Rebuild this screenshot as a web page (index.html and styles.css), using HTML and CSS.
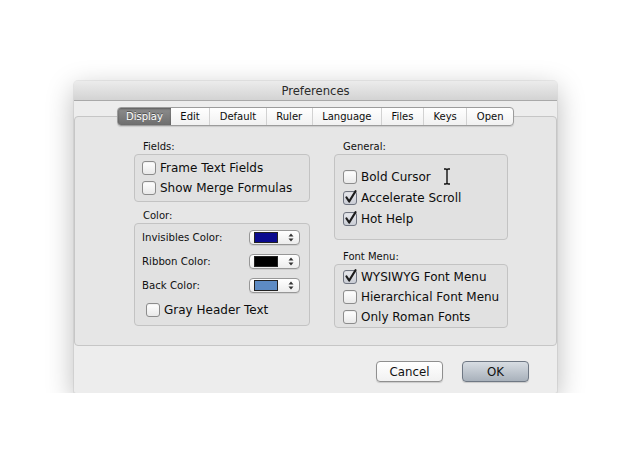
FILE: index.html
```html
<!DOCTYPE html>
<html>
<head>
<meta charset="utf-8">
<link rel="stylesheet" href="styles.css">
</head>
<body>
<div class="page">
  <div class="window">
    <div class="titlebar">Preferences</div>
    <div class="body">
      <div class="tabs">
        <div class="tab selected">Display</div>
        <div class="tab after-sel">Edit</div>
        <div class="tab">Default</div>
        <div class="tab">Ruler</div>
        <div class="tab">Language</div>
        <div class="tab">Files</div>
        <div class="tab">Keys</div>
        <div class="tab">Open</div>
      </div>
      <div class="panel">
        <div class="col col-left">
          <div class="group-label">Fields:</div>
          <div class="group fields">
            <label class="row"><span class="cb"></span>Frame Text Fields</label>
            <label class="row"><span class="cb"></span>Show Merge Formulas</label>
          </div>
          <div class="group-label spaced">Color:</div>
          <div class="group colors">
            <div class="color-row">
              <span class="clabel">Invisibles Color:</span>
              <span class="popup"><span class="swatch navy"></span><span class="arrows"><svg width="6" height="9" viewBox="0 0 6 9"><path d="M3 0.5 L5.5 3.5 H0.5 Z M3 8.5 L5.5 5.5 H0.5 Z" fill="#333"/></svg></span></span>
            </div>
            <div class="color-row">
              <span class="clabel">Ribbon Color:</span>
              <span class="popup"><span class="swatch black"></span><span class="arrows"><svg width="6" height="9" viewBox="0 0 6 9"><path d="M3 0.5 L5.5 3.5 H0.5 Z M3 8.5 L5.5 5.5 H0.5 Z" fill="#333"/></svg></span></span>
            </div>
            <div class="color-row">
              <span class="clabel">Back Color:</span>
              <span class="popup"><span class="swatch blue"></span><span class="arrows"><svg width="6" height="9" viewBox="0 0 6 9"><path d="M3 0.5 L5.5 3.5 H0.5 Z M3 8.5 L5.5 5.5 H0.5 Z" fill="#333"/></svg></span></span>
            </div>
            <label class="row gray-header"><span class="cb"></span>Gray Header Text</label>
          </div>
        </div>
        <div class="col col-right">
          <div class="group-label">General:</div>
          <div class="group general">
            <label class="row r21"><span class="cb"></span>Bold Cursor</label>
            <label class="row r21"><span class="cb checked"><svg class="tick" width="13" height="14" viewBox="0 0 13 14"><path d="M2.5 7.5 L5.2 11.5 L11.5 1.2" fill="none" stroke="#1c1c1c" stroke-width="2.2" stroke-linecap="round" stroke-linejoin="round"/></svg></span>Accelerate Scroll</label>
            <label class="row r21"><span class="cb checked"><svg class="tick" width="13" height="14" viewBox="0 0 13 14"><path d="M2.5 7.5 L5.2 11.5 L11.5 1.2" fill="none" stroke="#1c1c1c" stroke-width="2.2" stroke-linecap="round" stroke-linejoin="round"/></svg></span>Hot Help</label>
            <svg class="ibeam" width="8" height="17" viewBox="0 0 8 17"><path d="M1 1 H3 L4 2 L5 1 H7 M4 2 V15 M1 16 H3 L4 15 L5 16 H7" fill="none" stroke="#111" stroke-width="1.4"/></svg>
          </div>
          <div class="group-label spaced2">Font Menu:</div>
          <div class="group fontmenu">
            <label class="row"><span class="cb checked"><svg class="tick" width="13" height="14" viewBox="0 0 13 14"><path d="M2.5 7.5 L5.2 11.5 L11.5 1.2" fill="none" stroke="#1c1c1c" stroke-width="2.2" stroke-linecap="round" stroke-linejoin="round"/></svg></span>WYSIWYG Font Menu</label>
            <label class="row"><span class="cb"></span>Hierarchical Font Menu</label>
            <label class="row"><span class="cb"></span>Only Roman Fonts</label>
          </div>
        </div>
      </div>
      <div class="footer">
        <button class="btn">Cancel</button>
        <button class="btn default">OK</button>
      </div>
    </div>
  </div>
</div>
</body>
</html>
```
FILE: styles.css
```css
html, body {
  margin: 0;
  padding: 0;
  background: #ffffff;
}
body {
  font-family: "DejaVu Sans", "Liberation Sans", sans-serif;
  color: #111;
}
.page {
  padding: 81px 0 0 74px;
}
.window {
  width: 483px;
  height: 312px;
  background: #ededed;
  border-radius: 4px 4px 2px 2px;
  box-shadow: 0 8px 28px rgba(0, 0, 0, 0.28), 0 0 0 1px rgba(0, 0, 0, 0.06);
  display: flex;
  flex-direction: column;
}
.titlebar {
  height: 19px;
  line-height: 20px;
  border-bottom: 1px solid #a9a9a9;
  border-radius: 4px 4px 0 0;
  background: linear-gradient(#ececec, #d3d3d3);
  text-align: center;
  font-size: 11.6px;
  color: #2a2a2a;
}
.body {
  padding-top: 6px;
  display: flex;
  flex-direction: column;
}
.tabs {
  align-self: center;
  display: flex;
  height: 17px;
  border: 1px solid #9c9c9c;
  border-radius: 4px;
  background: linear-gradient(#ffffff, #f1f1f1);
  box-shadow: 0 1px 1px rgba(0, 0, 0, 0.12);
  position: relative;
  z-index: 2;
  overflow: hidden;
}
.tab {
  font-size: 10px;
  line-height: 17px;
  padding: 0 9.5px;
  color: #0d0d0d;
  border-left: 1px solid #d2d2d2;
}
.tab.selected, .tab.after-sel {
  border-left: none;
}
.tab.selected {
  background: linear-gradient(#8d8d8d, #6e6e6e);
  color: #fff;
  text-shadow: 0 -1px 0 rgba(0, 0, 0, 0.45);
  box-shadow: inset 0 1px 2px rgba(0, 0, 0, 0.35);
  padding: 0 8px;
}
.panel {
  margin-top: -10px;
  height: 205px;
  border: 1px solid #c6c6c6;
  border-radius: 4px;
  background: #e6e6e6;
  padding: 23px 0 0 59px;
  display: flex;
  gap: 24px;
}
.col {
  display: flex;
  flex-direction: column;
}
.col-left { width: 176px; }
.col-right { width: 174px; }
.group-label {
  font-size: 10px;
  height: 14px;
  line-height: 14px;
  padding-left: 9px;
  color: #111;
}
.group-label.spaced { margin-top: 7px; }
.group-label.spaced2 { margin-top: 10px; }
.group {
  border: 1px solid #c3c3c3;
  border-radius: 4px;
  background: #e1e1e1;
  display: flex;
  flex-direction: column;
}
.fields { padding: 3px 0 3px 7px; }
.colors { padding: 1px 9px 5px 6px; }
.general { padding: 11px 0 10px 8px; position: relative; }
.fontmenu { padding: 2px 0 0 8px; }
.row {
  display: flex;
  align-items: center;
  height: 20px;
  font-size: 12px;
  gap: 4px;
  color: #0d0d0d;
}
.row.r21 { height: 21px; }
.gray-header { margin-top: 3px; padding-left: 5px; }
.cb {
  width: 12px;
  height: 12px;
  border: 1px solid #8c8c8c;
  border-radius: 3px;
  background: linear-gradient(#ffffff, #e9e9e9);
  box-shadow: inset 0 1px 1px rgba(0, 0, 0, 0.06);
  flex: none;
  position: relative;
}
.cb.checked {
  background: linear-gradient(#e9eaee, #c9ccd4);
  border-color: #6f7480;
}
.tick {
  position: absolute;
  left: 0;
  top: -2px;
}
.color-row {
  display: flex;
  align-items: center;
  justify-content: space-between;
  height: 24px;
  font-size: 10px;
}
.clabel {
  padding-left: 1px;
  font-size: 10.2px;
}
.popup {
  width: 45px;
  height: 13px;
  border: 1px solid #979797;
  border-radius: 4px;
  background: linear-gradient(#ffffff, #ececec);
  box-shadow: 0 1px 0 rgba(0, 0, 0, 0.08);
  display: flex;
  align-items: center;
  padding-left: 4px;
  box-sizing: content-box;
}
.swatch {
  width: 22px;
  height: 9px;
  border: 1px solid #222;
}
.navy { background: #0a0a8e; }
.black { background: #000000; }
.blue { background: #5d8bc4; }
.arrows {
  margin-left: auto;
  margin-right: 5px;
  display: flex;
}
.ibeam {
  position: absolute;
  left: 108px;
  top: 13px;
}
.footer {
  display: flex;
  justify-content: flex-end;
  gap: 19px;
  padding: 15px 28px 0 0;
}
.btn {
  font-family: "DejaVu Sans", "Liberation Sans", sans-serif;
  font-size: 11.8px;
  height: 21px;
  padding: 0;
  border: 1px solid #8f8f8f;
  border-radius: 4px;
  background: linear-gradient(#ffffff, #f1f1f1);
  box-shadow: 0 1px 1px rgba(0, 0, 0, 0.15);
  color: #111;
  width: 67px;
}
.btn.default {
  width: 67px;
  border-color: #6f7884;
  background: linear-gradient(#d8dde3, #a8b1bb);
}
```
